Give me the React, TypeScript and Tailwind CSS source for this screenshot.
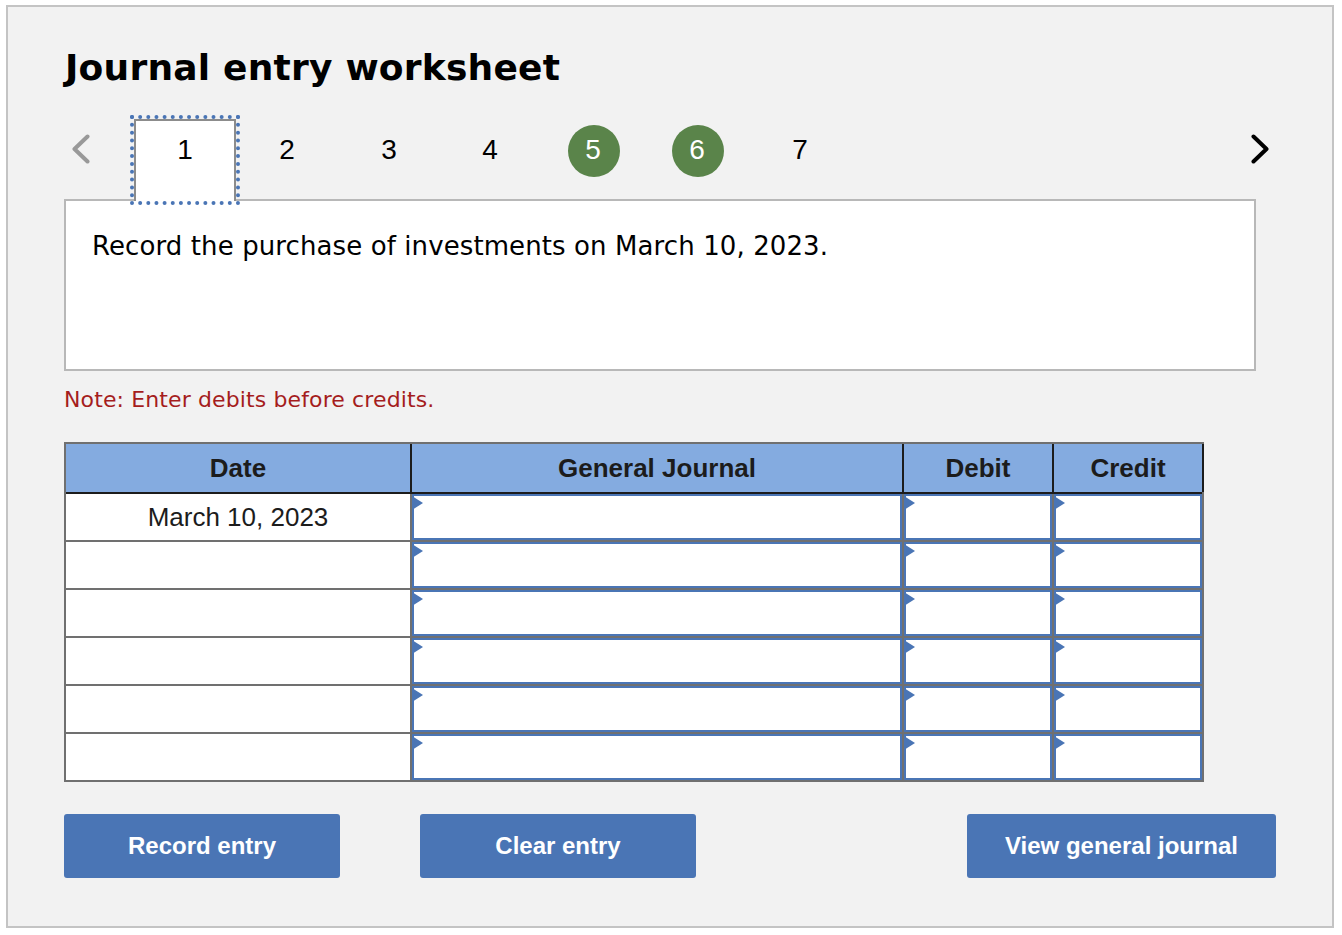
import { ReactNode } from 'react';

const tabs = [2, 3, 4, 5, 6, 7];
const rows = ['March 10, 2023', '', '', '', '', ''];

const InputCell = ({ width }: { width: string }) => (
    <div className={`relative ${width} h-full border-l-2 border-[#707070]`}>
        <div className="h-full border-2 border-[#4a75b5] bg-white" />
        <div className="absolute left-0 top-[2px] h-0 w-0 border-y-[7px] border-l-[11px] border-y-transparent border-l-[#4a75b5]" />
    </div>
);

const HeadCell = ({ width, children }: { width: string; children: ReactNode }) => (
    <div className={`${width} flex h-full items-center justify-center border-l-2 border-[#1c1c1c] text-[26px] font-bold text-[#1c1c1c]`}>
        {children}
    </div>
);

const ActionButton = ({ width, children }: { width: string; children: ReactNode }) => (
    <button className={`${width} h-16 rounded-[3px] bg-[#4a75b5] text-[24px] font-bold text-white`}>
        {children}
    </button>
);

export default function App() {
    return (
        <div className="h-[935px] w-[1342px] bg-white pl-[6px] pt-[5px] font-['Liberation_Sans',sans-serif]">
            <div className="h-[923px] w-[1328px] border-2 border-[#c4c4c4] bg-[#f2f2f2] pl-[56px] pt-[37px]">
                <h1 className="ml-[1px] font-['DejaVu_Sans',sans-serif] text-[36px] font-bold leading-[48px] tracking-[0.22px] text-black">
                    Journal entry worksheet
                </h1>

                <div className="relative z-10 mt-[27px] flex h-[80px] items-start">
                    <svg className="ml-[8px] mt-[15px] h-[30px] w-[18px]" viewBox="0 0 18 30" fill="none">
                        <path d="M15.5 2.5 L2.5 15 L15.5 27.5" stroke="#999999" strokeWidth="4" strokeLinecap="round" strokeLinejoin="round" />
                    </svg>
                    <div className="relative ml-[44px] h-[82px] w-[102px] border-x-2 border-t-2 border-[#8c8c8c] bg-white text-center text-[28px] leading-[58px] text-black">
                        1
                        {/* focus ring, round dots */}
                        <svg className="absolute -left-[6px] -top-[6px] h-[90px] w-[110px]" viewBox="0 0 110 90" fill="none" stroke="#4a75b5" strokeWidth="4" strokeLinecap="round">
                            <line x1="2" y1="2" x2="108" y2="2" strokeDasharray="0 8.15" />
                            <line x1="2" y1="88" x2="108" y2="88" strokeDasharray="0 8.15" />
                            <line x1="2" y1="2" x2="2" y2="88" strokeDasharray="0 7.82" />
                            <line x1="108" y1="2" x2="108" y2="88" strokeDasharray="0 7.82" />
                        </svg>
                    </div>
                    <div className="mt-[6px] flex h-[52px] items-center">
                        {tabs.map(tab => (
                            <div key={tab} className={`flex justify-center ${tab === 5 || tab === 6 ? 'w-[104px]' : 'w-[102px]'}`}>
                                <span className={`flex h-[52px] w-[52px] items-center justify-center rounded-full pb-[2px] text-[28px] ${tab === 5 || tab === 6 ? 'bg-[#5a844a] pr-[2px] text-white' : 'text-black'} ${tab === 4 || tab === 7 ? 'pr-[2px]' : ''}`}>
                                    {tab}
                                </span>
                            </div>
                        ))}
                    </div>
                    <svg className="ml-auto mr-[63px] mt-[15px] h-[30px] w-[18px]" viewBox="0 0 18 30" fill="none">
                        <path d="M2.5 2.5 L15.5 15 L2.5 27.5" stroke="#000000" strokeWidth="4" strokeLinecap="round" strokeLinejoin="round" />
                    </svg>
                </div>

                <div className="h-[172px] w-[1192px] border-2 border-[#b8b8b8] bg-white pl-[26px] pt-[27px] font-['DejaVu_Sans',sans-serif] text-[26px] leading-[36px] tracking-[0.1px] text-black">
                    Record the purchase of investments on March 10, 2023.
                </div>

                <p className="mt-[14px] font-['DejaVu_Sans',sans-serif] text-[22px] leading-[30px] tracking-[0.12px] text-[#a51d1d]">
                    Note: Enter debits before credits.
                </p>

                <div className="mt-[27px] w-[1140px] border-2 border-[#707070]">
                    <div className="flex h-[48px] bg-[#84abe0]">
                        <div className="flex h-full w-[344px] items-center justify-center text-[26px] font-bold text-[#1c1c1c]">Date</div>
                        <HeadCell width="w-[492px]">General Journal</HeadCell>
                        <HeadCell width="w-[150px]">Debit</HeadCell>
                        <HeadCell width="w-[152px] -mr-[2px] border-r-2">Credit</HeadCell>
                    </div>
                    {rows.map((date, i) => (
                        <div key={i} className={`flex h-[48px] bg-white ${i === 0 ? 'border-t-2 border-[#1c1c1c]' : 'border-t-2 border-[#707070]'}`}>
                            <div className="flex h-full w-[344px] items-center justify-center text-[26px] text-[#1c1c1c]">{date}</div>
                            <InputCell width="w-[492px]" />
                            <InputCell width="w-[150px]" />
                            <InputCell width="w-[150px]" />
                        </div>
                    ))}
                </div>

                <div className="mt-[32px] flex w-[1212px]">
                    <ActionButton width="w-[276px]">Record entry</ActionButton>
                    <ActionButton width="ml-[80px] w-[276px]">Clear entry</ActionButton>
                    <ActionButton width="ml-auto w-[309px]">View general journal</ActionButton>
                </div>
            </div>
        </div>
    );
}
